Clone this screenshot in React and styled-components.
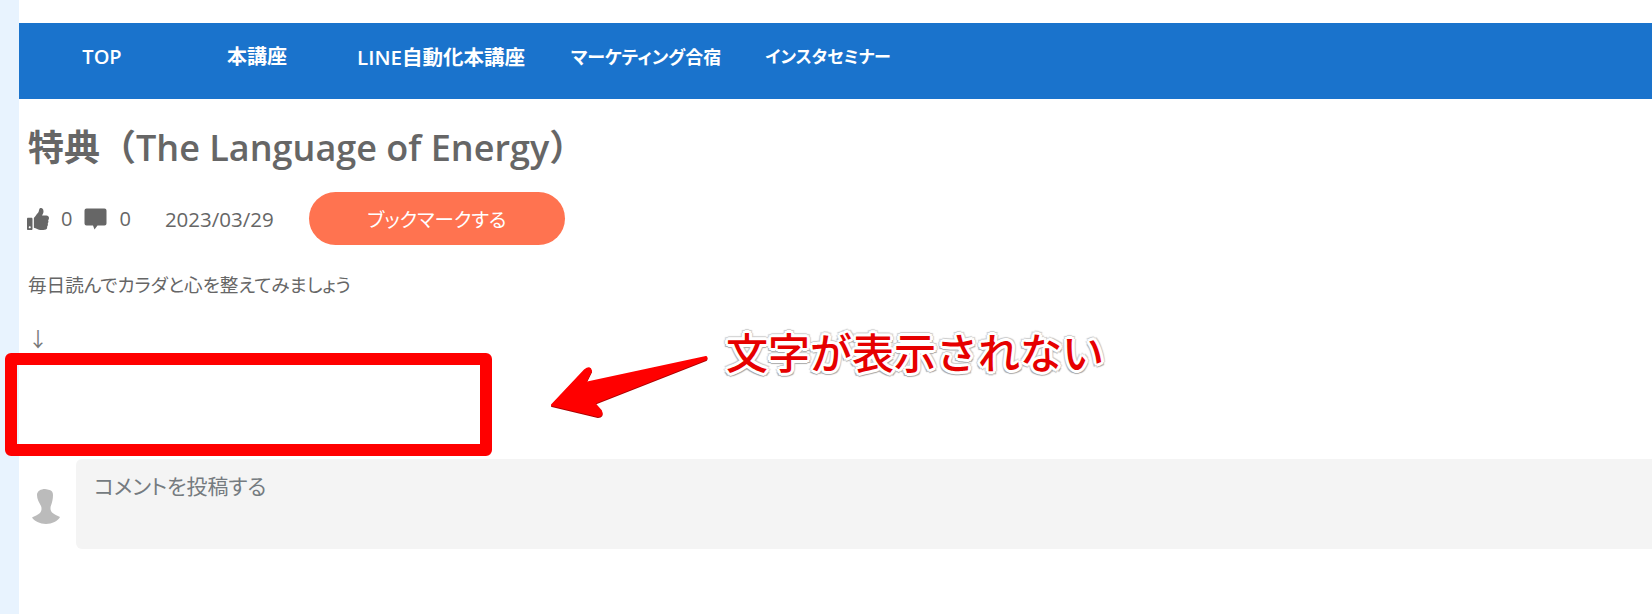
import React from 'react';
import styled, { createGlobalStyle } from 'styled-components';
import { FaThumbsUp } from 'react-icons/fa';

const FONT = `"Open Sans", "Noto Sans CJK JP", sans-serif`;

const GlobalStyle = createGlobalStyle`
  html, body {
    margin: 0;
    height: 100%;
    background: #fff;
    overflow: hidden;
  }
  * { box-sizing: border-box; }
`;

const Page = styled.div`
  position: relative;
  display: flex;
  width: 1652px;
  height: 614px;
  overflow: hidden;
  font-family: ${FONT};
  font-feature-settings: "palt";
  color: #666;
`;

const Sidebar = styled.div`
  width: 19px;
  flex: none;
  background: #e8f3fe;
`;

const Main = styled.main`
  flex: 1;
  min-width: 0;
  padding-top: 23px;
`;

const Nav = styled.nav`
  display: flex;
  align-items: flex-start;
  height: 76px;
  padding-top: 21px;
  background: #1a73cc;
`;

const NavItem = styled.a`
  width: ${props => props.$width}px;
  flex: none;
  text-align: center;
  color: #fff;
  font-size: ${props => props.$size}px;
  font-weight: 600;
  line-height: 26px;
  white-space: nowrap;
`;

const Title = styled.h1`
  margin: 0;
  padding: 26px 0 0 9px;
  font-size: 36px;
  font-weight: 600;
  line-height: 46px;
  font-feature-settings: normal;
  color: #666;
  white-space: nowrap;
`;

const Meta = styled.div`
  display: flex;
  align-items: center;
  height: 53px;
  margin-top: 21px;
  padding-left: 8px;
  font-size: 20px;
`;

const Count = styled.span`
  margin: 0 ${props => props.$right}px 0 ${props => props.$left}px;
`;

const CommentIcon = styled.svg`
  width: 23px;
  height: 23px;
  fill: #666;
`;

const DateText = styled.span`
  width: 144px;
  font-size: 20.500px;
`;

const Bookmark = styled.button`
  width: 256px;
  height: 53px;
  border: 0;
  border-radius: 27px;
  background: #ff7350;
  color: #fff;
  font-family: inherit;
  font-feature-settings: inherit;
  font-size: 19.500px;
`;

const Lead = styled.p`
  margin: 27px 0 0 9px;
  font-size: 18.600px;
  line-height: 26px;
`;

const DownArrow = styled.p`
  margin: 28px 0 0 9px;
  font-family: "Noto Sans CJK JP", sans-serif;
  font-size: 20px;
  line-height: 26px;
  color: #777;
`;

const CommentRow = styled.div`
  display: flex;
  align-items: flex-start;
  margin-top: 107px;
  padding-left: 13px;
`;

const Avatar = styled.svg`
  width: 28px;
  height: 35px;
  flex: none;
  margin: 30px 16px 0 0;
  fill: #bbb;
`;

const CommentBox = styled.div`
  flex: 1;
  height: 90px;
  padding: 11px 18px;
  border-radius: 6px 0 0 6px;
  background: #f4f4f4;
  font-size: 21px;
  line-height: 32px;
  color: #757b80;
`;

// annotation drawn on top of the screenshot
const RedFrame = styled.div`
  position: absolute;
  left: 5px;
  top: 353px;
  width: 487px;
  height: 103px;
  border: 12px solid #f00;
  border-radius: 6px;
`;

const PointerArrow = styled.svg`
  position: absolute;
  left: 540px;
  top: 345px;
  width: 180px;
  height: 80px;
  filter: drop-shadow(0 1px 0 #a00);
`;

const Note = styled.div`
  position: absolute;
  left: 726px;
  top: 322px;
  font-size: 42px;
  font-weight: 500;
  line-height: 62px;
  white-space: nowrap;
  font-feature-settings: normal;
  color: #e60000;
  text-shadow:
    3px 0 0 #fff, -3px 0 0 #fff, 0 3px 0 #fff, 0 -3px 0 #fff,
    2px 2px 0 #fff, -2px 2px 0 #fff, 2px -2px 0 #fff, -2px -2px 0 #fff,
    4px 0 1px #ccc, -4px 0 1px #ccc, 0 4px 1px #aaa, 0 -4px 1px #ccc,
    3px 3px 1px #aaa, -3px 3px 1px #aaa, 3px -3px 1px #ccc, -3px -3px 1px #ccc;
`;

const NAV_ITEMS = [
  { label: 'TOP', width: 166, size: 20 },
  { label: '本講座', width: 144, size: 20 },
  { label: 'LINE自動化本講座', width: 224, size: 20.500 },
  { label: 'マーケティング合宿', width: 186, size: 18 },
  { label: 'インスタセミナー', width: 178, size: 17 },
];

const App = () => (
  <Page>
    <GlobalStyle />
    <Sidebar />
    <Main>
      <Nav>
        {NAV_ITEMS.map(item => (
          <NavItem key={item.label} $width={item.width} $size={item.size}>
            {item.label}
          </NavItem>
        ))}
      </Nav>
      <Title>特典（The Language of Energy）</Title>
      <Meta>
        <FaThumbsUp size={22} color="#666" />
        <Count $left={12} $right={12}>0</Count>
        <CommentIcon viewBox="0 0 23 23">
          <path d="M2.500 1.500h18a2 2 0 0 1 2 2v13a2 2 0 0 1-2 2h-7l-3 4-1.500-4h-6.500a2 2 0 0 1-2-2v-13a2 2 0 0 1 2-2z" />
        </CommentIcon>
        <Count $left={12} $right={34}>0</Count>
        <DateText>2023/03/29</DateText>
        <Bookmark>ブックマークする</Bookmark>
      </Meta>
      <Lead>毎日読んでカラダと心を整えてみましょう</Lead>
      <DownArrow>↓</DownArrow>
      <CommentRow>
        <Avatar viewBox="0 0 28 35">
          <path d="M5 6c0-4 4-6 8-6 2 0 3 1 4.500 1 2 .5 3.500 2 3.500 5 0 4-1 8-2 10.500-1 2.500-.5 5 1 7 2 2 5.500 3 8 4.500-2 4-8 7-14 7S2 32 0 28.500c2.500-1.500 6-2.500 8-4.500 1.500-2 2-4.500 1-7C7 13.500 5 10 5 6z" />
        </Avatar>
        <CommentBox>コメントを投稿する</CommentBox>
      </CommentRow>
    </Main>
    <RedFrame />
    <PointerArrow viewBox="0 0 180 80">
      <path
        d="M12 60 L45 25 Q50 21 51 26 L45 38 L166 12 Q167 13 166 14 L54 58 L61 66 Q63 71 58 71 Z"
        fill="#f00"
        stroke="#f00"
        strokeWidth="2"
        strokeLinejoin="round"
      />
    </PointerArrow>
    <Note>文字が表示されない</Note>
  </Page>
);

export default App;
